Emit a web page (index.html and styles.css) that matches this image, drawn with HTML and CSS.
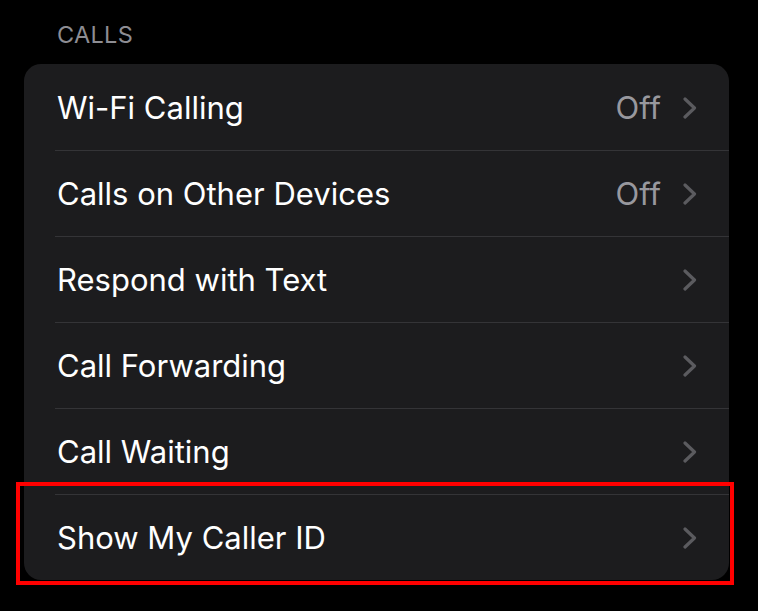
FILE: index.html
```html
<!DOCTYPE html>
<html lang="en">
<head>
<meta charset="utf-8">
<link rel="stylesheet" href="styles.css">
</head>
<body>
<div class="page">
  <div class="section-header">CALLS</div>
  <div class="card">
    <div class="row first">
      <div class="row-inner">
        <span class="label">Wi-Fi Calling</span>
        <span class="value">Off</span>
        <svg class="chev" viewBox="0 0 14 22" width="14" height="22"><path d="M2 2 L11.5 11 L2 20" fill="none" stroke="#5b5b5f" stroke-width="3.2" stroke-linecap="round" stroke-linejoin="round"/></svg>
      </div>
    </div>
    <div class="row">
      <div class="row-inner">
        <span class="label">Calls on Other Devices</span>
        <span class="value">Off</span>
        <svg class="chev" viewBox="0 0 14 22" width="14" height="22"><path d="M2 2 L11.5 11 L2 20" fill="none" stroke="#5b5b5f" stroke-width="3.2" stroke-linecap="round" stroke-linejoin="round"/></svg>
      </div>
    </div>
    <div class="row">
      <div class="row-inner">
        <span class="label">Respond with Text</span>
        <svg class="chev" viewBox="0 0 14 22" width="14" height="22"><path d="M2 2 L11.5 11 L2 20" fill="none" stroke="#5b5b5f" stroke-width="3.2" stroke-linecap="round" stroke-linejoin="round"/></svg>
      </div>
    </div>
    <div class="row">
      <div class="row-inner">
        <span class="label">Call Forwarding</span>
        <svg class="chev" viewBox="0 0 14 22" width="14" height="22"><path d="M2 2 L11.5 11 L2 20" fill="none" stroke="#5b5b5f" stroke-width="3.2" stroke-linecap="round" stroke-linejoin="round"/></svg>
      </div>
    </div>
    <div class="row">
      <div class="row-inner">
        <span class="label">Call Waiting</span>
        <svg class="chev" viewBox="0 0 14 22" width="14" height="22"><path d="M2 2 L11.5 11 L2 20" fill="none" stroke="#5b5b5f" stroke-width="3.2" stroke-linecap="round" stroke-linejoin="round"/></svg>
      </div>
    </div>
    <div class="row">
      <div class="row-inner">
        <span class="label">Show My Caller ID</span>
        <svg class="chev" viewBox="0 0 14 22" width="14" height="22"><path d="M2 2 L11.5 11 L2 20" fill="none" stroke="#5b5b5f" stroke-width="3.2" stroke-linecap="round" stroke-linejoin="round"/></svg>
      </div>
    </div>
    <div class="highlight"></div>
  </div>
</div>
</body>
</html>
```
FILE: styles.css
```css
html, body {
  margin: 0;
  padding: 0;
  background: #000;
}
body {
  font-family: Inter, "Noto Sans", "Liberation Sans", sans-serif;
  width: 758px;
  height: 611px;
  overflow: hidden;
}
.page {
  padding: 0 29px 0 24px;
}
.section-header {
  color: #8d8d93;
  font-size: 23.5px;
  line-height: 28px;
  padding: 21px 0 0 33px;
  height: 64px;
  box-sizing: border-box;
  letter-spacing: 0.3px;
}
.card {
  position: relative;
  background: #1c1c1e;
  border-radius: 17px;
}
.row {
  display: flex;
  padding-left: 31px;
}
.row-inner {
  flex: 1;
  display: flex;
  align-items: center;
  height: 86px;
  box-sizing: border-box;
  border-top: 1px solid #343437;
  padding: 0 32px 0 2px;
}
.row.first .row-inner {
  border-top-color: transparent;
}
.label {
  flex: 1;
  color: #ffffff;
  font-size: 31px;
}
.value {
  color: #98989e;
  font-size: 31px;
  margin-right: 22px;
}
.chev {
  display: block;
  flex: none;
}
.highlight {
  position: absolute;
  left: -8px;
  top: 418px;
  width: 718px;
  height: 103px;
  box-sizing: border-box;
  border: 4px solid #ff0000;
}
```
